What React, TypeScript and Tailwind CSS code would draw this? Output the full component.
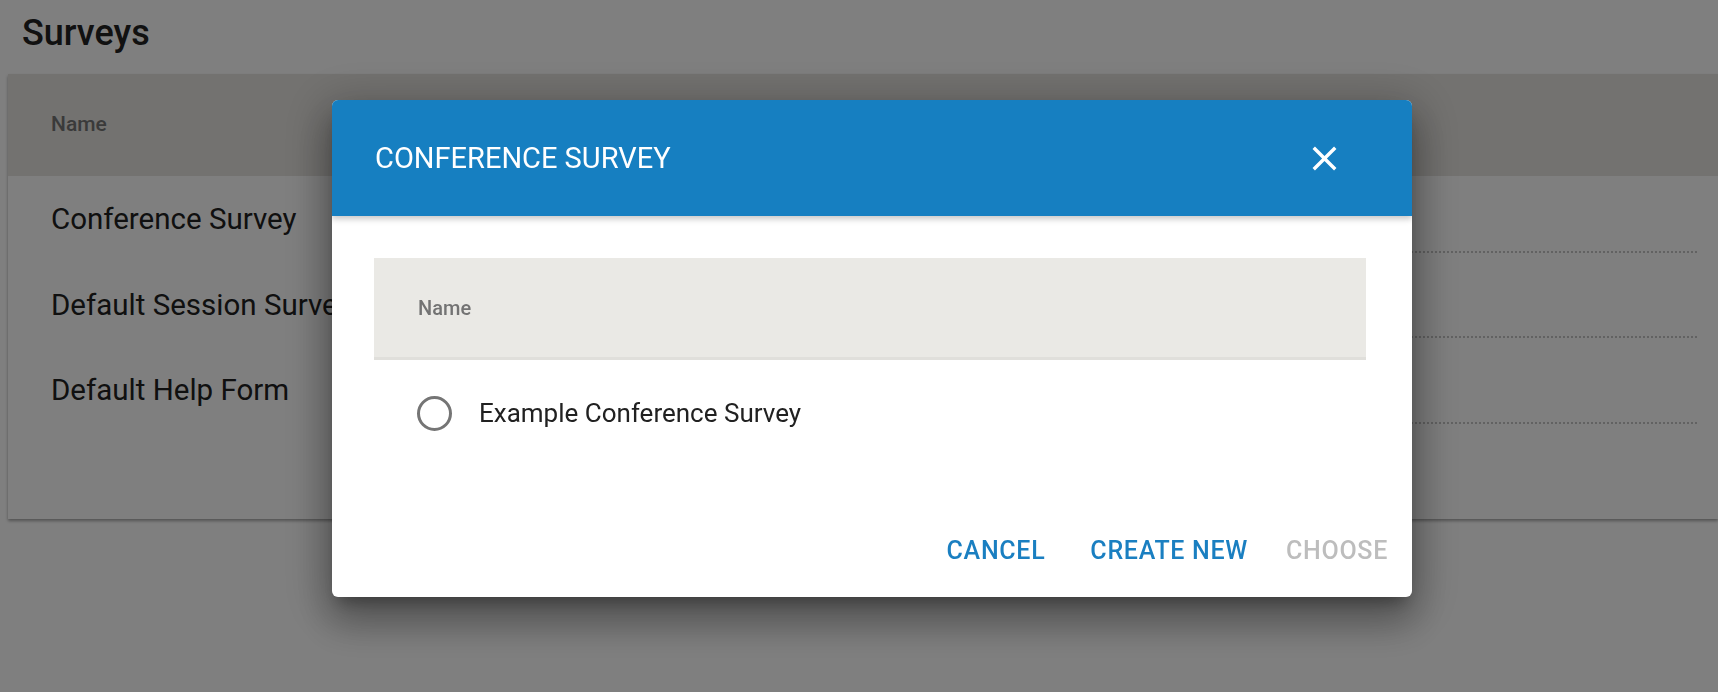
import React from "react";

const rows = [
  { name: "Conference Survey", h: "h-[77px]", pt: "pt-[10px]" },
  { name: "Default Session Survey", h: "h-[85px]", pt: "pt-[19px]" },
  { name: "Default Help Form", h: "h-[86px]", pt: "pt-[19px]" },
];

export default function App() {
  return (
    <div className="relative h-[692px] w-full overflow-hidden bg-white font-['Roboto',sans-serif]">
      {/* Page */}
      <div className="pl-[22px] pt-[15px] text-[36px] font-medium leading-[36px] text-[#222]">
        Surveys
      </div>
      <div className="ml-[8px] mt-[23px] h-[445px] bg-white shadow-[0_2px_3px_rgba(0,0,0,0.35)]">
        <div className="flex h-[102px] items-center bg-[#e6e4e0] pl-[43px] text-[21px] font-medium text-[#757575]">
          Name
        </div>
        {rows.map((r) => (
          <div key={r.name} className={`flex ${r.h}`}>
            <div className={`flex w-[380px] items-center pl-[43px] ${r.pt} text-[29.5px] text-[#212121]`}>
              {r.name}
            </div>
            <div className="mr-[21px] flex-1 border-b-2 border-dotted border-[#c4c4c4]" />
          </div>
        ))}
      </div>

      {/* Overlay + dialog */}
      <div className="fixed inset-0 flex items-center justify-center bg-black/50 pl-[26px] pt-[5px]">
        <div className="flex h-[497px] w-[1080px] flex-col overflow-hidden rounded-[6px] bg-white shadow-[0_11px_15px_-7px_rgba(0,0,0,0.3),0_24px_38px_3px_rgba(0,0,0,0.24),0_9px_46px_8px_rgba(0,0,0,0.22)]">
          <div className="relative z-10 flex h-[116px] shrink-0 items-center justify-between bg-[#167fc1] pl-[43px] pr-[67px] shadow-[0_3px_6px_rgba(0,0,0,0.22)]">
            <span className="pt-[2px] text-[29px] font-normal text-white">CONFERENCE SURVEY</span>
            <svg width="41" height="41" viewBox="0 0 24 24" fill="white" aria-hidden="true">
              <path d="M19 6.41 17.59 5 12 10.59 6.41 5 5 6.41 10.59 12 5 17.59 6.41 19 12 13.41 17.59 19 19 17.59 13.41 12z" />
            </svg>
          </div>
          <div className="ml-[42px] mr-[46px] mt-[42px]">
            <div className="flex h-[102px] items-center border-b-[3px] border-[#e0dfdb] bg-[#eae9e5] pl-[44px] text-[20px] font-medium text-[#737373]">
              Name
            </div>
            <div className="flex h-[100px] items-center pl-[43px] pt-[6px]">
              <div className="h-[35px] w-[35px] rounded-full border-[3px] border-[#757575]" />
              <span className="ml-[27px] text-[26px] text-[#212121]">Example Conference Survey</span>
            </div>
          </div>
          <div className="mt-auto flex h-[92px] items-center justify-end pr-[24px] text-[25px] font-medium tracking-[0.7px]">
            <span className="text-[#1a7fc1]">CANCEL</span>
            <span className="ml-[45px] text-[#1a7fc1]">CREATE NEW</span>
            <span className="ml-[38px] text-[#bdbdbd]">CHOOSE</span>
          </div>
        </div>
      </div>
    </div>
  );
}
